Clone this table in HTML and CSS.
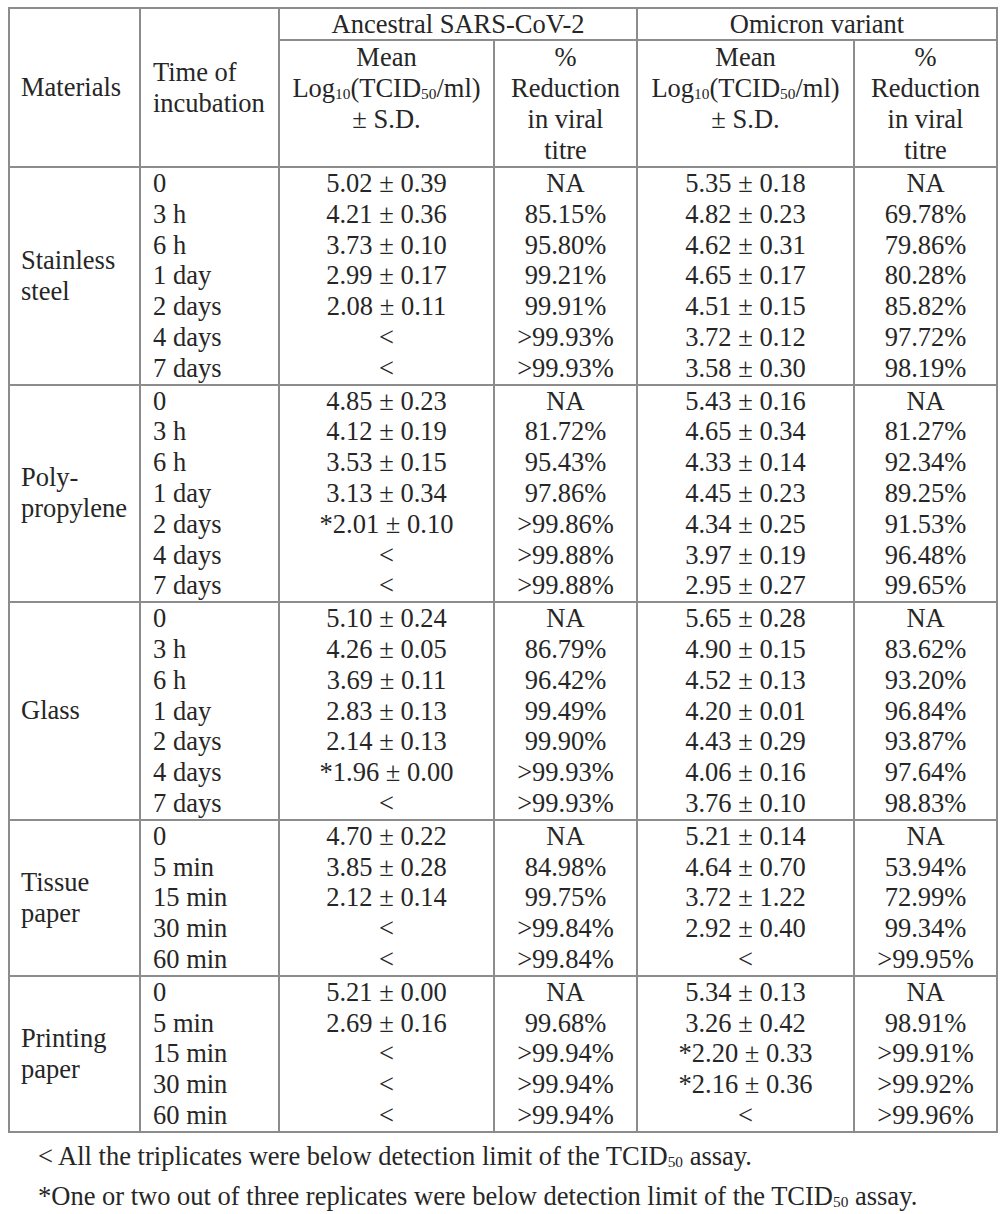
FILE: index.html
```html
<!DOCTYPE html>
<html>
<head>
<meta charset="utf-8">
<link rel="stylesheet" href="styles.css">
</head>
<body>
<table class="data">
<colgroup>
<col class="c-mat"><col class="c-time"><col class="c-am"><col class="c-ap"><col class="c-om"><col class="c-op">
</colgroup>
<thead>
<tr class="h1">
<th rowspan="2" class="mat">Materials</th>
<th rowspan="2" class="time">Time of<br>incubation</th>
<th colspan="2">Ancestral SARS-CoV-2</th>
<th colspan="2">Omicron variant</th>
</tr>
<tr class="h2">
<th>Mean<br>Log<sub>10</sub>(TCID<sub>50</sub>/ml)<br>± S.D.</th>
<th>%<br>Reduction<br>in viral<br>titre</th>
<th>Mean<br>Log<sub>10</sub>(TCID<sub>50</sub>/ml)<br>± S.D.</th>
<th>%<br>Reduction<br>in viral<br>titre</th>
</tr>
</thead>
<tbody>
<tr><td rowspan="7" class="mat">Stainless<br>steel</td><td class="time">0</td><td>5.02 ± 0.39</td><td>NA</td><td>5.35 ± 0.18</td><td>NA</td></tr>
<tr><td class="time">3 h</td><td>4.21 ± 0.36</td><td>85.15%</td><td>4.82 ± 0.23</td><td>69.78%</td></tr>
<tr><td class="time">6 h</td><td>3.73 ± 0.10</td><td>95.80%</td><td>4.62 ± 0.31</td><td>79.86%</td></tr>
<tr><td class="time">1 day</td><td>2.99 ± 0.17</td><td>99.21%</td><td>4.65 ± 0.17</td><td>80.28%</td></tr>
<tr><td class="time">2 days</td><td>2.08 ± 0.11</td><td>99.91%</td><td>4.51 ± 0.15</td><td>85.82%</td></tr>
<tr><td class="time">4 days</td><td>&lt;</td><td>&gt;99.93%</td><td>3.72 ± 0.12</td><td>97.72%</td></tr>
<tr><td class="time">7 days</td><td>&lt;</td><td>&gt;99.93%</td><td>3.58 ± 0.30</td><td>98.19%</td></tr>
</tbody>
<tbody>
<tr><td rowspan="7" class="mat">Poly-<br>propylene</td><td class="time">0</td><td>4.85 ± 0.23</td><td>NA</td><td>5.43 ± 0.16</td><td>NA</td></tr>
<tr><td class="time">3 h</td><td>4.12 ± 0.19</td><td>81.72%</td><td>4.65 ± 0.34</td><td>81.27%</td></tr>
<tr><td class="time">6 h</td><td>3.53 ± 0.15</td><td>95.43%</td><td>4.33 ± 0.14</td><td>92.34%</td></tr>
<tr><td class="time">1 day</td><td>3.13 ± 0.34</td><td>97.86%</td><td>4.45 ± 0.23</td><td>89.25%</td></tr>
<tr><td class="time">2 days</td><td>*2.01 ± 0.10</td><td>&gt;99.86%</td><td>4.34 ± 0.25</td><td>91.53%</td></tr>
<tr><td class="time">4 days</td><td>&lt;</td><td>&gt;99.88%</td><td>3.97 ± 0.19</td><td>96.48%</td></tr>
<tr><td class="time">7 days</td><td>&lt;</td><td>&gt;99.88%</td><td>2.95 ± 0.27</td><td>99.65%</td></tr>
</tbody>
<tbody>
<tr><td rowspan="7" class="mat">Glass</td><td class="time">0</td><td>5.10 ± 0.24</td><td>NA</td><td>5.65 ± 0.28</td><td>NA</td></tr>
<tr><td class="time">3 h</td><td>4.26 ± 0.05</td><td>86.79%</td><td>4.90 ± 0.15</td><td>83.62%</td></tr>
<tr><td class="time">6 h</td><td>3.69 ± 0.11</td><td>96.42%</td><td>4.52 ± 0.13</td><td>93.20%</td></tr>
<tr><td class="time">1 day</td><td>2.83 ± 0.13</td><td>99.49%</td><td>4.20 ± 0.01</td><td>96.84%</td></tr>
<tr><td class="time">2 days</td><td>2.14 ± 0.13</td><td>99.90%</td><td>4.43 ± 0.29</td><td>93.87%</td></tr>
<tr><td class="time">4 days</td><td>*1.96 ± 0.00</td><td>&gt;99.93%</td><td>4.06 ± 0.16</td><td>97.64%</td></tr>
<tr><td class="time">7 days</td><td>&lt;</td><td>&gt;99.93%</td><td>3.76 ± 0.10</td><td>98.83%</td></tr>
</tbody>
<tbody>
<tr><td rowspan="5" class="mat">Tissue<br>paper</td><td class="time">0</td><td>4.70 ± 0.22</td><td>NA</td><td>5.21 ± 0.14</td><td>NA</td></tr>
<tr><td class="time">5 min</td><td>3.85 ± 0.28</td><td>84.98%</td><td>4.64 ± 0.70</td><td>53.94%</td></tr>
<tr><td class="time">15 min</td><td>2.12 ± 0.14</td><td>99.75%</td><td>3.72 ± 1.22</td><td>72.99%</td></tr>
<tr><td class="time">30 min</td><td>&lt;</td><td>&gt;99.84%</td><td>2.92 ± 0.40</td><td>99.34%</td></tr>
<tr><td class="time">60 min</td><td>&lt;</td><td>&gt;99.84%</td><td>&lt;</td><td>&gt;99.95%</td></tr>
</tbody>
<tbody>
<tr><td rowspan="5" class="mat">Printing<br>paper</td><td class="time">0</td><td>5.21 ± 0.00</td><td>NA</td><td>5.34 ± 0.13</td><td>NA</td></tr>
<tr><td class="time">5 min</td><td>2.69 ± 0.16</td><td>99.68%</td><td>3.26 ± 0.42</td><td>98.91%</td></tr>
<tr><td class="time">15 min</td><td>&lt;</td><td>&gt;99.94%</td><td>*2.20 ± 0.33</td><td>&gt;99.91%</td></tr>
<tr><td class="time">30 min</td><td>&lt;</td><td>&gt;99.94%</td><td>*2.16 ± 0.36</td><td>&gt;99.92%</td></tr>
<tr><td class="time">60 min</td><td>&lt;</td><td>&gt;99.94%</td><td>&lt;</td><td>&gt;99.96%</td></tr>
</tbody>
</table>
<div class="notes">
<p>&lt; All the triplicates were below detection limit of the TCID<sub>50</sub> assay.</p>
<p>*One or two out of three replicates were below detection limit of the TCID<sub>50</sub> assay.</p>
</div>
</body>
</html>
```
FILE: styles.css
```css
html, body {
  margin: 0;
  padding: 0;
  background: #ffffff;
}
body {
  padding: 7px 0 0 8px;
  font-family: "Liberation Serif", "Times New Roman", Tinos, serif;
  font-size: 26.5px;
  color: #262626;
}
.data {
  border-collapse: collapse;
  table-layout: fixed;
  width: 988px;
  border: 2px solid #8c8c8c;
}
.c-mat { width: 131px; }
.c-time { width: 139px; }
.c-am { width: 215px; }
.c-ap { width: 143px; }
.c-om { width: 217px; }
.c-op { width: 143px; }
.data th, .data td {
  border-left: 2px solid #8c8c8c;
  border-right: 2px solid #8c8c8c;
  padding: 0;
  line-height: 30.8px;
  text-align: center;
  font-weight: normal;
  white-space: nowrap;
}
.data thead tr.h1 th {
  border-bottom: 2px solid #8c8c8c;
  line-height: 30px;
}
.data thead tr.h2 th {
  vertical-align: top;
  padding-top: 1px;
  line-height: 31px;
}
.data thead tr.h1 th.mat,
.data thead tr.h1 th.time {
  vertical-align: middle;
  line-height: 31px;
  text-align: left;
}
.data thead tr.h1 th.mat { padding-left: 11px; }
.data thead tr.h1 th.time { padding-left: 12px; }
.data tbody {
  border-top: 2px solid #8c8c8c;
}
.data td.mat {
  text-align: left;
  padding-left: 11px;
  vertical-align: middle;
  line-height: 31px;
}
.data td.time {
  text-align: left;
  padding-left: 12px;
}
sub {
  font-size: 0.58em;
  vertical-align: -0.1em;
  line-height: 0;
}
.notes {
  padding: 7px 0 0 30px;
}
.notes p {
  margin: 0 0 8px;
  line-height: 32px;
}
```
